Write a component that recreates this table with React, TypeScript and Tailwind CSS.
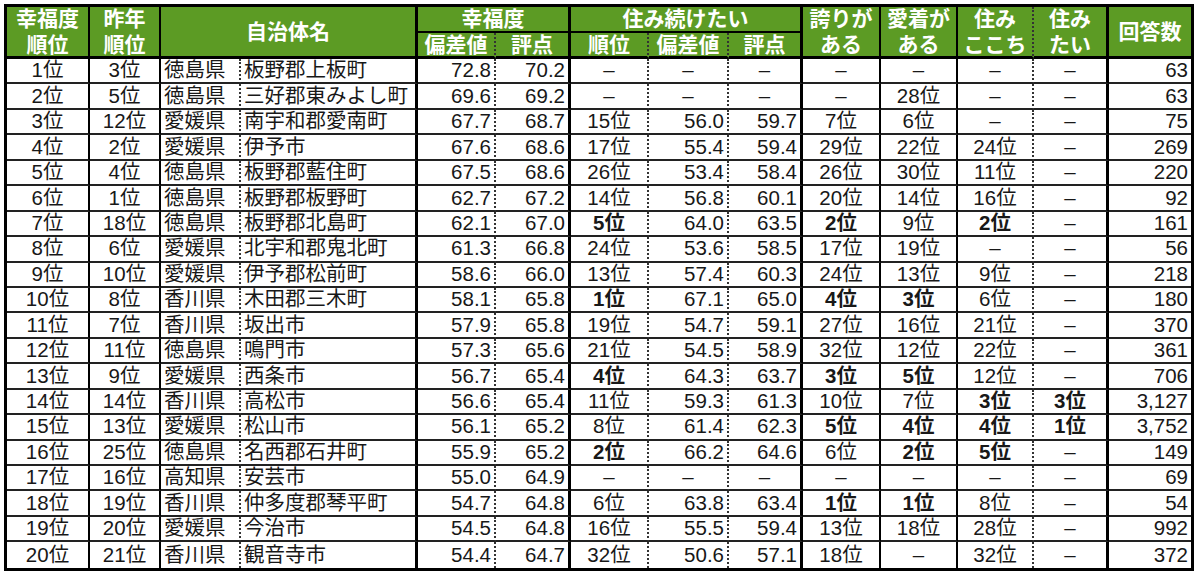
import React from "react";

// "!" prefix marks a bold cell
const rows: string[][] = [
  ["1位", "3位", "徳島県", "板野郡上板町", "72.8", "70.2", "–", "–", "–", "–", "–", "–", "–", "63"],
  ["2位", "5位", "徳島県", "三好郡東みよし町", "69.6", "69.2", "–", "–", "–", "–", "28位", "–", "–", "63"],
  ["3位", "12位", "愛媛県", "南宇和郡愛南町", "67.7", "68.7", "15位", "56.0", "59.7", "7位", "6位", "–", "–", "75"],
  ["4位", "2位", "愛媛県", "伊予市", "67.6", "68.6", "17位", "55.4", "59.4", "29位", "22位", "24位", "–", "269"],
  ["5位", "4位", "徳島県", "板野郡藍住町", "67.5", "68.6", "26位", "53.4", "58.4", "26位", "30位", "11位", "–", "220"],
  ["6位", "1位", "徳島県", "板野郡板野町", "62.7", "67.2", "14位", "56.8", "60.1", "20位", "14位", "16位", "–", "92"],
  ["7位", "18位", "徳島県", "板野郡北島町", "62.1", "67.0", "!5位", "64.0", "63.5", "!2位", "9位", "!2位", "–", "161"],
  ["8位", "6位", "愛媛県", "北宇和郡鬼北町", "61.3", "66.8", "24位", "53.6", "58.5", "17位", "19位", "–", "–", "56"],
  ["9位", "10位", "愛媛県", "伊予郡松前町", "58.6", "66.0", "13位", "57.4", "60.3", "24位", "13位", "9位", "–", "218"],
  ["10位", "8位", "香川県", "木田郡三木町", "58.1", "65.8", "!1位", "67.1", "65.0", "!4位", "!3位", "6位", "–", "180"],
  ["11位", "7位", "香川県", "坂出市", "57.9", "65.8", "19位", "54.7", "59.1", "27位", "16位", "21位", "–", "370"],
  ["12位", "11位", "徳島県", "鳴門市", "57.3", "65.6", "21位", "54.5", "58.9", "32位", "12位", "22位", "–", "361"],
  ["13位", "9位", "愛媛県", "西条市", "56.7", "65.4", "!4位", "64.3", "63.7", "!3位", "!5位", "12位", "–", "706"],
  ["14位", "14位", "香川県", "高松市", "56.6", "65.4", "11位", "59.3", "61.3", "10位", "7位", "!3位", "!3位", "3,127"],
  ["15位", "13位", "愛媛県", "松山市", "56.1", "65.2", "8位", "61.4", "62.3", "!5位", "!4位", "!4位", "!1位", "3,752"],
  ["16位", "25位", "徳島県", "名西郡石井町", "55.9", "65.2", "!2位", "66.2", "64.6", "6位", "!2位", "!5位", "–", "149"],
  ["17位", "16位", "高知県", "安芸市", "55.0", "64.9", "–", "–", "–", "–", "–", "–", "–", "69"],
  ["18位", "19位", "香川県", "仲多度郡琴平町", "54.7", "64.8", "6位", "63.8", "63.4", "!1位", "!1位", "8位", "–", "54"],
  ["19位", "20位", "愛媛県", "今治市", "54.5", "64.8", "16位", "55.5", "59.4", "13位", "18位", "28位", "–", "992"],
  ["20位", "21位", "香川県", "観音寺市", "54.4", "64.7", "32位", "50.6", "57.1", "18位", "–", "32位", "–", "372"],
];

const solid = "border-r-2 border-r-black";
const thick = "border-r-[3px] border-r-black";
const dotted = "border-r-2 border-r-[#333] [border-right-style:dotted]";

const rightBorder = [solid, solid, dotted, thick, dotted, thick, dotted, dotted, thick, solid, solid, dotted, thick, ""];
const align = ["c", "c", "l", "l", "r", "r", "c", "r", "r", "c", "c", "c", "c", "r"];

const head = "flex items-center justify-center bg-[#5c9b24] text-white font-bold text-[21px] leading-[26px] text-center";

function Cell({ v, col, last }: { v: string; col: number; last: boolean }) {
  const bold = v.startsWith("!");
  const text = bold ? v.slice(1) : v;
  const a = text === "–" ? "c" : align[col];
  const justify = a === "c" ? "justify-center" : a === "l" ? "justify-start pl-[3px]" : "justify-end pr-[3px]";
  return (
    <div
      className={`flex items-center whitespace-nowrap overflow-hidden text-[20.5px] text-[#181818] ${justify} ${
        bold ? "font-bold" : ""
      } ${rightBorder[col]} ${last ? "" : "border-b-2 border-b-[#222]"}`}
    >
      {text}
    </div>
  );
}

export default function App() {
  return (
    <div className="bg-white w-[1200px] h-[579px] pt-[4px] pl-[4px]" style={{ fontFamily: '"Liberation Sans", "Noto Sans CJK JP", sans-serif' }}>
      <div className="grid w-fit border-[3px] border-black grid-cols-[83px_71px_80px_177px_78px_75px_78px_80px_74px_78px_77px_76px_75px_82px] grid-rows-[26px_26px_repeat(20,25.45px)]">
        <div className={`${head} row-span-2 flex-col ${solid} border-b-[3px] border-b-black`}>
          <span>幸福度</span>
          <span>順位</span>
        </div>
        <div className={`${head} row-span-2 flex-col ${solid} border-b-[3px] border-b-black`}>
          <span>昨年</span>
          <span>順位</span>
        </div>
        <div className={`${head} row-span-2 col-span-2 ${thick} border-b-[3px] border-b-black`}>自治体名</div>
        <div className={`${head} col-span-2 ${thick} border-b-2 border-b-black`}>幸福度</div>
        <div className={`${head} col-span-3 ${thick} border-b-2 border-b-black`}>住み続けたい</div>
        <div className={`${head} row-span-2 flex-col ${solid} border-b-[3px] border-b-black`}>
          <span>誇りが</span>
          <span>ある</span>
        </div>
        <div className={`${head} row-span-2 flex-col ${solid} border-b-[3px] border-b-black`}>
          <span>愛着が</span>
          <span>ある</span>
        </div>
        <div className={`${head} row-span-2 flex-col ${dotted} border-b-[3px] border-b-black`}>
          <span>住み</span>
          <span>ここち</span>
        </div>
        <div className={`${head} row-span-2 flex-col ${thick} border-b-[3px] border-b-black`}>
          <span>住み</span>
          <span>たい</span>
        </div>
        <div className={`${head} row-span-2 border-b-[3px] border-b-black`}>回答数</div>
        <div className={`${head} ${dotted} border-b-[3px] border-b-black`}>偏差値</div>
        <div className={`${head} ${thick} border-b-[3px] border-b-black`}>評点</div>
        <div className={`${head} ${dotted} border-b-[3px] border-b-black`}>順位</div>
        <div className={`${head} ${dotted} border-b-[3px] border-b-black`}>偏差値</div>
        <div className={`${head} ${thick} border-b-[3px] border-b-black`}>評点</div>
        {rows.map((r, i) =>
          r.map((v, j) => <Cell key={`${i}-${j}`} v={v} col={j} last={i === rows.length - 1} />)
        )}
      </div>
    </div>
  );
}
